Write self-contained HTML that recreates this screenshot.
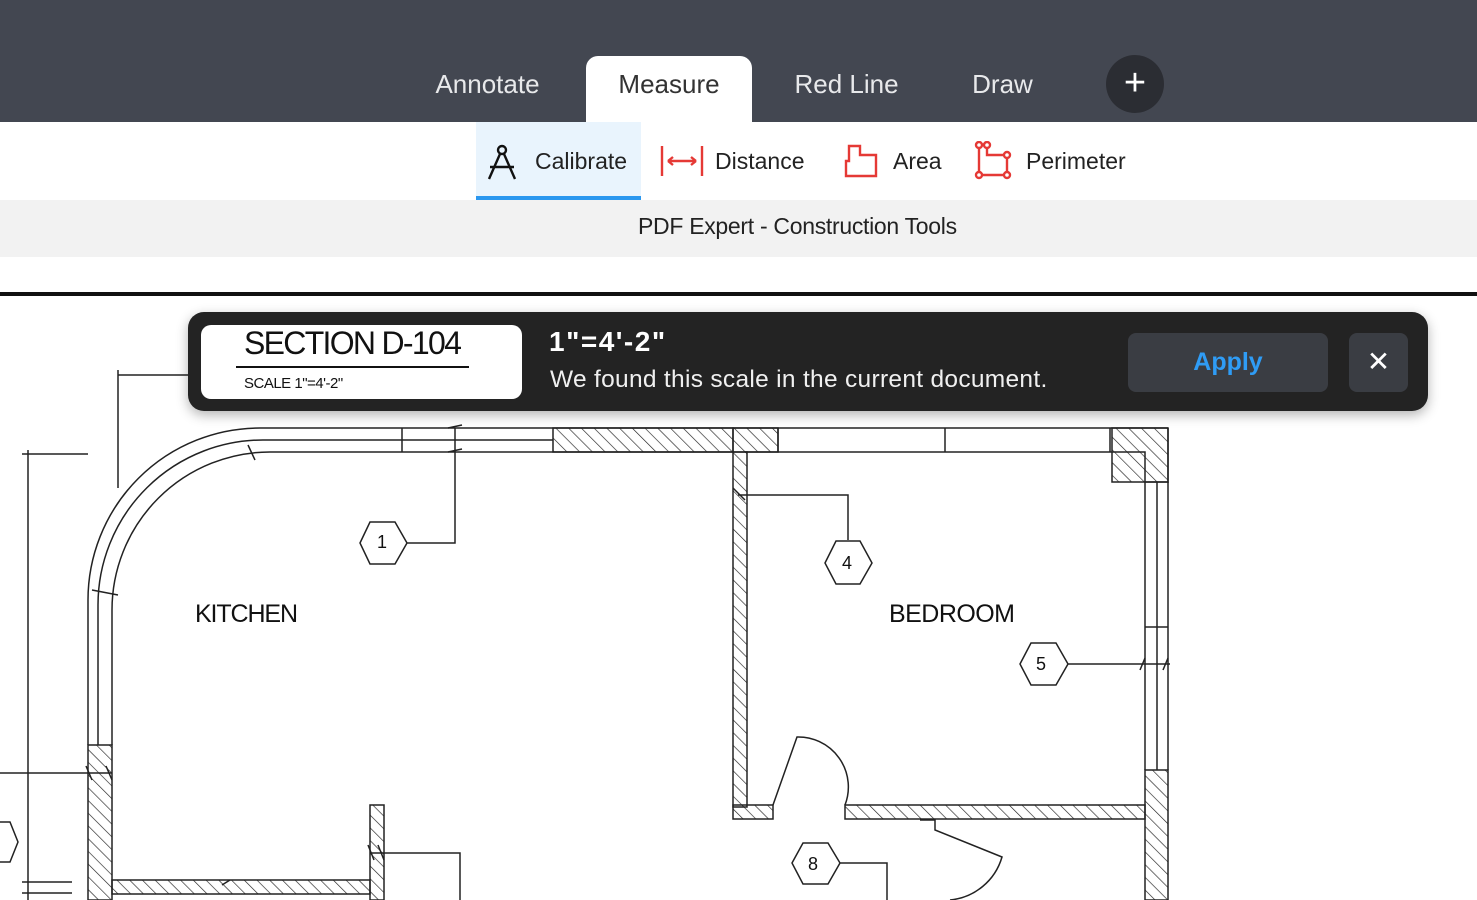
<!DOCTYPE html>
<html><head><meta charset="utf-8"><style>
*{margin:0;padding:0;box-sizing:border-box}
html,body{width:1477px;height:900px;overflow:hidden}
body{background:#fff;font-family:"Liberation Sans",sans-serif;position:relative}
.top{position:absolute;left:0;top:0;width:1477px;height:122px;background:#434751}
.tab{position:absolute;top:56px;height:66px;line-height:56px;font-size:26px;color:#e8e9eb;text-align:center}
.tab.act{background:#fff;color:#333;border-radius:12px 12px 0 0}
.plus{position:absolute;left:1106px;top:55px;width:58px;height:58px;border-radius:50%;background:#2b2d33;color:#fff;font-size:38px;line-height:56px;text-align:center}
.tool{position:absolute;top:122px;height:78px;font-size:23px;color:#222;line-height:78px}
.band{position:absolute;left:0;top:200px;width:1477px;height:57px;background:#f2f2f2}
.rule{position:absolute;left:0;top:292px;width:1477px;height:4px;background:#111}
.banner{position:absolute;left:188px;top:312px;width:1240px;height:99px;background:#232323;border-radius:16px;box-shadow:0 4px 12px rgba(0,0,0,.3)}
.card{position:absolute;left:13px;top:13px;width:321px;height:74px;background:#fff;border-radius:10px}
</style></head><body>
<svg style="position:absolute;left:0;top:296px" width="1477" height="604">
<defs><pattern id="h" width="9" height="9" patternUnits="userSpaceOnUse" patternTransform="rotate(-45)"><line x1="0" y1="0" x2="0" y2="9" stroke="#222" stroke-width="1.3"/></pattern></defs>
<g fill="none" stroke="#222" stroke-width="1.5" transform="translate(0,-296)">
<path d="M88 745 V600 A172 172 0 0 1 260 428 H1168"/>
<path d="M112 745 V610 A158 158 0 0 1 270 452 H733"/>
<path d="M98 745 V605 A165 165 0 0 1 265 440 H553"/>
<path d="M745 452 H1145 V482 H1168 V428"/>
<rect x="553" y="428" width="180" height="24" fill="url(#h)"/>
<rect x="733" y="428" width="45" height="24" fill="url(#h)"/>
<rect x="1112" y="428" width="56" height="54" fill="url(#h)"/>
<path d="M778 428V452M945 428V452M1110 428V452M402 428V452M248 445L255 460M92 590L118 595"/>
<rect x="733" y="452" width="14" height="355" fill="url(#h)"/>
<rect x="733" y="805" width="40" height="14" fill="url(#h)"/>
<rect x="845" y="805" width="300" height="14" fill="url(#h)"/>
<rect x="1145" y="770" width="23" height="130" fill="url(#h)"/>
<path d="M1145 482V770M1168 482V770M1157 482V770M1145 627H1168"/>
<rect x="88" y="745" width="24" height="155" fill="url(#h)"/>
<rect x="112" y="880" width="258" height="14" fill="url(#h)"/>
<rect x="370" y="805" width="14" height="95" fill="url(#h)"/>
<path d="M455 428V543H407M360 543L370 522H395L407 543L395 564H370Z"/>
<path d="M738 495H848V540M825 563L836 541H860L872 563L860 584H836Z"/>
<path d="M1068 664H1170M1020 664L1031 643H1056L1068 664L1056 685H1031Z"/>
<path d="M370 853H460V900M840 863H887V900M792 863L803 843H828L840 863L828 884H803Z"/>
<path d="M773 805L797 737A50 50 0 0 1 845 805"/>
<path d="M920 820H935V830L1002 857A60 60 0 0 1 950 900"/>
<path d="M118 370V488M118 375H188M28 450V900M22 454H88M0 773H112M22 882H72M22 893H72M0 822L10 822L18 842L10 862L0 862"/>
<path d="M448 428L462 425M448 452L462 449M733 488L745 500M1145 658L1140 670M1168 658L1163 670M86 766L92 780M106 766L112 780M368 845L374 860M378 845L384 860M222 885L230 880"/>
</g>
<g font-family="'Liberation Sans',sans-serif" font-size="25" fill="#111">
<text x="195" y="326" textLength="103">KITCHEN</text><text x="889" y="326" textLength="126">BEDROOM</text>
<g font-size="18"><text x="377" y="252">1</text><text x="842" y="273">4</text><text x="1036" y="374">5</text><text x="808" y="574">8</text></g>
<text transform="translate(22,625) rotate(90)" font-size="18">31'-10"</text>
</g></svg>
<div class="top"></div>
<div class="tab" style="left:410px;width:155px">Annotate</div>
<div class="tab act" style="left:586px;width:166px">Measure</div>
<div class="tab" style="left:775px;width:143px">Red Line</div>
<div class="tab" style="left:955px;width:95px">Draw</div>
<div class="plus">+</div>
<div style="position:absolute;left:476px;top:122px;width:165px;height:78px;background:#e9f4fd"></div>
<div style="position:absolute;left:476px;top:196px;width:165px;height:4px;background:#2a97ef"></div>
<svg style="position:absolute;left:486px;top:143px" width="32" height="38" fill="none" stroke="#111" stroke-width="2.4"><circle cx="16" cy="7" r="4"/><path d="M14 11L3 36M18 11L29 36M4 24H28"/></svg>
<div class="tool" style="left:535px">Calibrate</div>
<svg style="position:absolute;left:659px;top:145px" width="46" height="32" fill="none" stroke="#e53935" stroke-width="2.4"><path d="M3 1V31M43 1V31M9 16H37M9 16L14 12M9 16L14 20M37 16L32 12M37 16L32 20"/></svg>
<div class="tool" style="left:715px">Distance</div>
<svg style="position:absolute;left:843px;top:144px" width="36" height="34" fill="none" stroke="#e53935" stroke-width="2.4"><path d="M6 2H17V11H33V32H3V17H6Z"/></svg>
<div class="tool" style="left:893px">Area</div>
<svg style="position:absolute;left:973px;top:141px" width="40" height="40" fill="none" stroke="#e53935" stroke-width="2.4"><path d="M6 4H14V14H34V34H6Z"/><g fill="#fff"><circle cx="6" cy="4" r="3"/><circle cx="14" cy="4" r="3"/><circle cx="34" cy="14" r="3"/><circle cx="34" cy="34" r="3"/><circle cx="6" cy="34" r="3"/></g></svg>
<div class="tool" style="left:1026px">Perimeter</div>
<div class="band"><div style="position:absolute;left:638px;top:13px;font-size:23px;color:#222;white-space:nowrap;letter-spacing:-0.3px">PDF Expert - Construction Tools</div></div>
<div class="rule"></div>
<div class="banner">
<div class="card">
<div style="position:absolute;left:43px;top:0;font-size:32px;color:#111;letter-spacing:-1.7px">SECTION D-104</div>
<div style="position:absolute;left:35px;top:41px;width:233px;height:2px;background:#111"></div>
<div style="position:absolute;left:43px;top:50px;font-size:15px;color:#111;letter-spacing:-0.5px">SCALE 1"=4'-2"</div>
</div>
<div style="position:absolute;left:361px;top:14px;font-size:28px;font-weight:bold;color:#fff;letter-spacing:1.5px">1"=4'-2"</div>
<div style="position:absolute;left:362px;top:54px;font-size:24.5px;color:#f0f0f0;letter-spacing:0.3px">We found this scale in the current document.</div>
<div style="position:absolute;left:940px;top:21px;width:200px;height:59px;background:#3a3d43;border-radius:8px;color:#2f9cf5;font-size:25px;font-weight:bold;text-align:center;line-height:59px">Apply</div>
<div style="position:absolute;left:1161px;top:21px;width:59px;height:59px;background:#3a3d43;border-radius:8px;color:#fff;font-size:28px;text-align:center;line-height:57px">✕</div>
</div>
</body></html>
